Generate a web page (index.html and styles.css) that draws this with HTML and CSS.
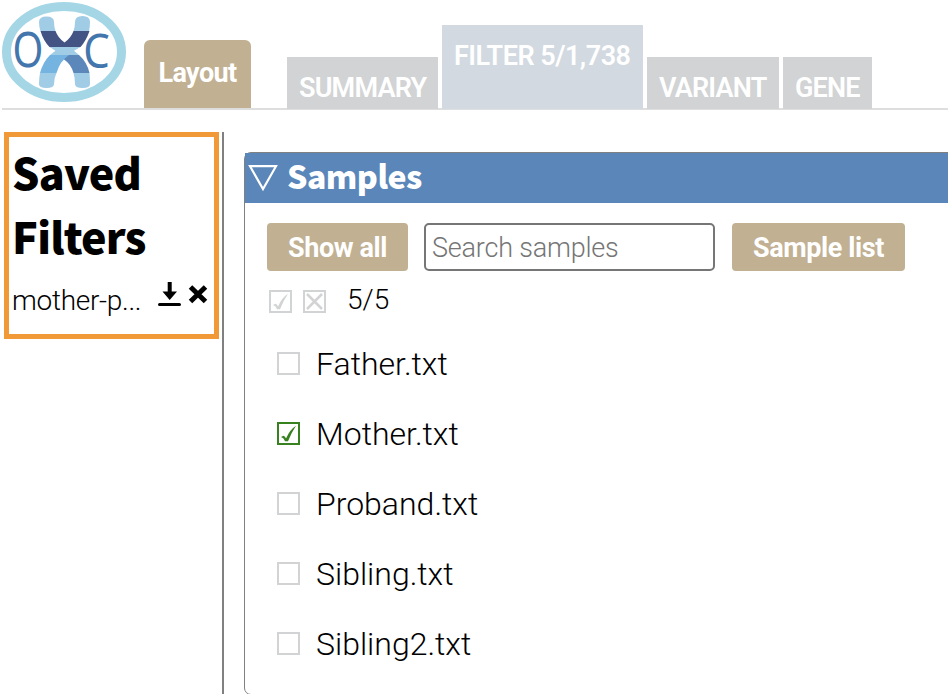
FILE: index.html
```html
<!DOCTYPE html>
<html lang="en">
<head>
<meta charset="utf-8">
<title>OXC Filter</title>
<link rel="stylesheet" href="styles.css">
</head>
<body>
<header class="topbar">
  <svg class="logo" width="124" height="100" viewBox="0 0 124 100" role="img" aria-label="OXC">
    <ellipse cx="62" cy="50" rx="57.5" ry="45.5" fill="#fff" stroke="#a5d6e6" stroke-width="9"/>
    <text class="logo-letter" transform="translate(10.400 65.200) scale(.79 .97)">O</text>
    <text class="logo-letter" transform="translate(81.200 65.500) scale(.84 .96)">C</text>
    <path fill="#a0cce6" d="M37 20Q37 14.500 44.500 14.500Q52 14.500 52 20Q52 25 53.500 29H38.500Q37 25 37 20ZM88 20Q88 14 80.500 14Q73 14 73 20Q73 25 71.500 29H87Q88 25 88 20ZM38 71H54.500Q52 76 52 82Q52 86 44.500 86Q37 86 37 82Q37 76 38 71ZM87.500 71H71.500Q73 76 73 82Q73 86 80.500 86Q88 86 88 82Q88 76 87.500 71Z"/>
    <path fill="#425384" d="M38.500 29H53.500Q56 36 62.500 40.500Q69 36 71.500 29H87.500Q84 39 78.500 45H47.500Q41.500 39 38.500 29Z"/>
    <path fill="#a0cce6" d="M47.500 45H78.500L72 48.700L77 53H48L53.500 48.700Z"/>
    <path fill="#5b87ba" d="M62 53H77Q85 60 87.500 71H71.500Q69 62 62 57.500Z"/>
    <path fill="#75b3e1" d="M48 53H67Q58 59 54.500 71H38Q41 60 48 53Z"/>
  </svg>
  <button class="layout-btn">Layout</button>
  <nav class="tabs">
    <a class="tab tab-summary">SUMMARY</a>
    <a class="tab tab-active">FILTER 5/1,738</a>
    <a class="tab tab-variant">VARIANT</a>
    <a class="tab tab-gene">GENE</a>
  </nav>
</header>
<main class="workspace">
  <aside class="sidebar">
    <section class="saved">
      <h2>Saved<br>Filters</h2>
      <div class="saved-row">
        <span class="saved-name">mother-p...</span>
        <svg class="download" width="24" height="24" viewBox="0 0 24 24"><path d="M9.700 0h4v9.500H19L11.700 18 4.500 9.500h5.200zM1.500 21h20a1 1 0 0 1 0 3h-20a1 1 0 0 1 0-3z"/></svg>
        <svg class="remove" width="20" height="20" viewBox="0 0 20 20"><path d="M2.500 3L17.500 17.500M17.500 3L2.500 17.500" stroke="#000" stroke-width="5"/></svg>
      </div>
    </section>
  </aside>
  <section class="panel">
    <div class="panel-head">
      <svg class="caret" width="30" height="28" viewBox="0 0 30 28"><path d="M2 2.200H28L15 25Z" fill="none" stroke="#fff" stroke-width="2.200"/></svg>
      <h2>Samples</h2>
    </div>
    <div class="controls">
      <button class="btn show-all">Show all</button>
      <input class="search" type="text" placeholder="Search samples">
      <button class="btn sample-list">Sample list</button>
    </div>
    <div class="counter">
      <svg class="box" viewBox="0 0 23 23"><rect x="1" y="1" width="21" height="21"/><path class="tick" d="M4 15L6.500 13.800Q8.300 14.200 9 16.500Q13 7.500 19 3.800Q14.500 10.500 11 19.300H8Q7 16 4 15Z"/></svg>
      <svg class="box" viewBox="0 0 23 23"><rect x="1" y="1" width="21" height="21"/><path class="cross" d="M4 4L19 19M19 4L4 19"/></svg>
      <span class="count">5/5</span>
    </div>
    <ul class="samples">
      <li><svg class="box" viewBox="0 0 23 23"><rect x="1" y="1" width="21" height="21"/></svg><span>Father.txt</span></li>
      <li><svg class="box checked" viewBox="0 0 23 23"><rect x="1" y="1" width="21" height="21"/><path class="tick" d="M4 15L6.500 13.800Q8.300 14.200 9 16.500Q13 7.500 19 3.800Q14.500 10.500 11 19.300H8Q7 16 4 15Z"/></svg><span>Mother.txt</span></li>
      <li><svg class="box" viewBox="0 0 23 23"><rect x="1" y="1" width="21" height="21"/></svg><span>Proband.txt</span></li>
      <li><svg class="box" viewBox="0 0 23 23"><rect x="1" y="1" width="21" height="21"/></svg><span>Sibling.txt</span></li>
      <li><svg class="box" viewBox="0 0 23 23"><rect x="1" y="1" width="21" height="21"/></svg><span>Sibling2.txt</span></li>
    </ul>
  </section>
</main>
</body>
</html>
```
FILE: styles.css
```css
* { box-sizing: border-box; }
body {
  margin: 0;
  height: 694px;
  overflow: hidden;
  background: #fff;
  color: #000;
  font-family: Roboto, sans-serif;
  font-weight: 300;
}
h2 {
  margin: 0;
  font-family: "Noto Sans CJK SC", "Noto Sans", sans-serif;
  font-weight: 900;
}
button { border: 0; padding: 0; font-family: inherit; }
svg { display: block; flex: none; }

.topbar {
  display: flex;
  align-items: flex-end;
  height: 110px;
  margin-left: 2px;
  background: linear-gradient(#dedede, #dedede) bottom / 100% 2px no-repeat;
}
.logo { align-self: flex-start; margin-top: 2px; }
.logo-letter { font: 400 50px "Noto Sans", sans-serif; fill: #4376ac; }
.layout-btn {
  width: 107px;
  height: 68px;
  margin: 0 36px 2px 18px;
  padding-bottom: 3px;
  border-radius: 6px 6px 0 0;
  background: #c1b092;
  color: #fff;
  font-size: 27px;
  font-weight: 700;
  letter-spacing: -0.6px;
}
.tabs { display: flex; align-items: flex-end; gap: 4px; height: 109px; margin-bottom: 1px; }
.tab {
  height: 52px;
  padding-left: 12px;
  background: #d1d3d4;
  color: #fff;
  font-size: 27px;
  font-weight: 600;
  letter-spacing: -0.8px;
  line-height: 62px;
  white-space: nowrap;
}
.tab-summary { width: 151px; }
.tab-active { width: 201px; height: 84px; background: #d2d9e0; letter-spacing: -0.5px; }
.tab-variant { width: 132px; }
.tab-gene { width: 89px; }

.workspace { display: flex; height: 584px; padding-top: 22px; }
.sidebar { flex: none; width: 224px; padding-left: 4px; border-right: 2px solid #808080; }
.saved { width: 215px; height: 207px; padding: 2px 0 0 3px; border: 5px solid #f19937; }
.saved h2 { font-size: 43px; line-height: 64px; letter-spacing: -0.8px; }
.saved-row { display: flex; }
.saved-name { width: 146px; padding-top: 17px; font-size: 28px; line-height: 33px; letter-spacing: -0.3px; white-space: nowrap; }
.download { margin-top: 15px; }
.remove { margin: 17px 0 0 6px; }

.panel {
  width: 740px;
  height: 543px;
  margin: 20px 0 0 20px;
  flex: none;
  border: 1px solid #808080;
  border-radius: 7px;
}
.panel-head { display: flex; height: 50px; background: #5b86b9; color: #fff; }
.caret { margin: 11px 9px 0 3px; }
.panel-head h2 { font-size: 32px; line-height: 45px; letter-spacing: -0.5px; }
.controls { display: flex; padding: 20px 0 0 22px; }
.btn {
  height: 48px;
  padding-top: 1px;
  border-radius: 4px;
  background: #c1b092;
  color: #fff;
  font-size: 27px;
  font-weight: 700;
  letter-spacing: -0.4px;
}
.show-all { width: 141px; }
.search {
  width: 291px;
  height: 48px;
  margin: 0 17px 0 16px;
  padding: 2px 6px 0;
  border: 2px solid #767676;
  border-radius: 5px;
  font: 300 27px Roboto, sans-serif;
  letter-spacing: -0.2px;
}
.search::placeholder { color: #757575; opacity: 1; }
.sample-list { width: 173px; }
.counter { display: flex; gap: 11px; padding: 19px 0 0 24px; height: 57px; }
.box { width: 23px; height: 23px; fill: none; stroke: #d1d3d4; stroke-width: 2; }
.box .tick { fill: #d1d3d4; stroke: none; }
.box .cross { stroke-width: 2.5; }
.count { margin: -7px 0 0 10px; font-size: 28px; line-height: 33px; }
.checked { stroke: #37811f; }
.box.checked .tick { fill: #37811f; }
.samples { margin: 0; padding: 0 0 0 32px; list-style: none; }
.samples li { display: flex; align-items: center; gap: 16px; height: 70px; font-size: 32px; }
.samples span { padding-top: 1px; }
```
